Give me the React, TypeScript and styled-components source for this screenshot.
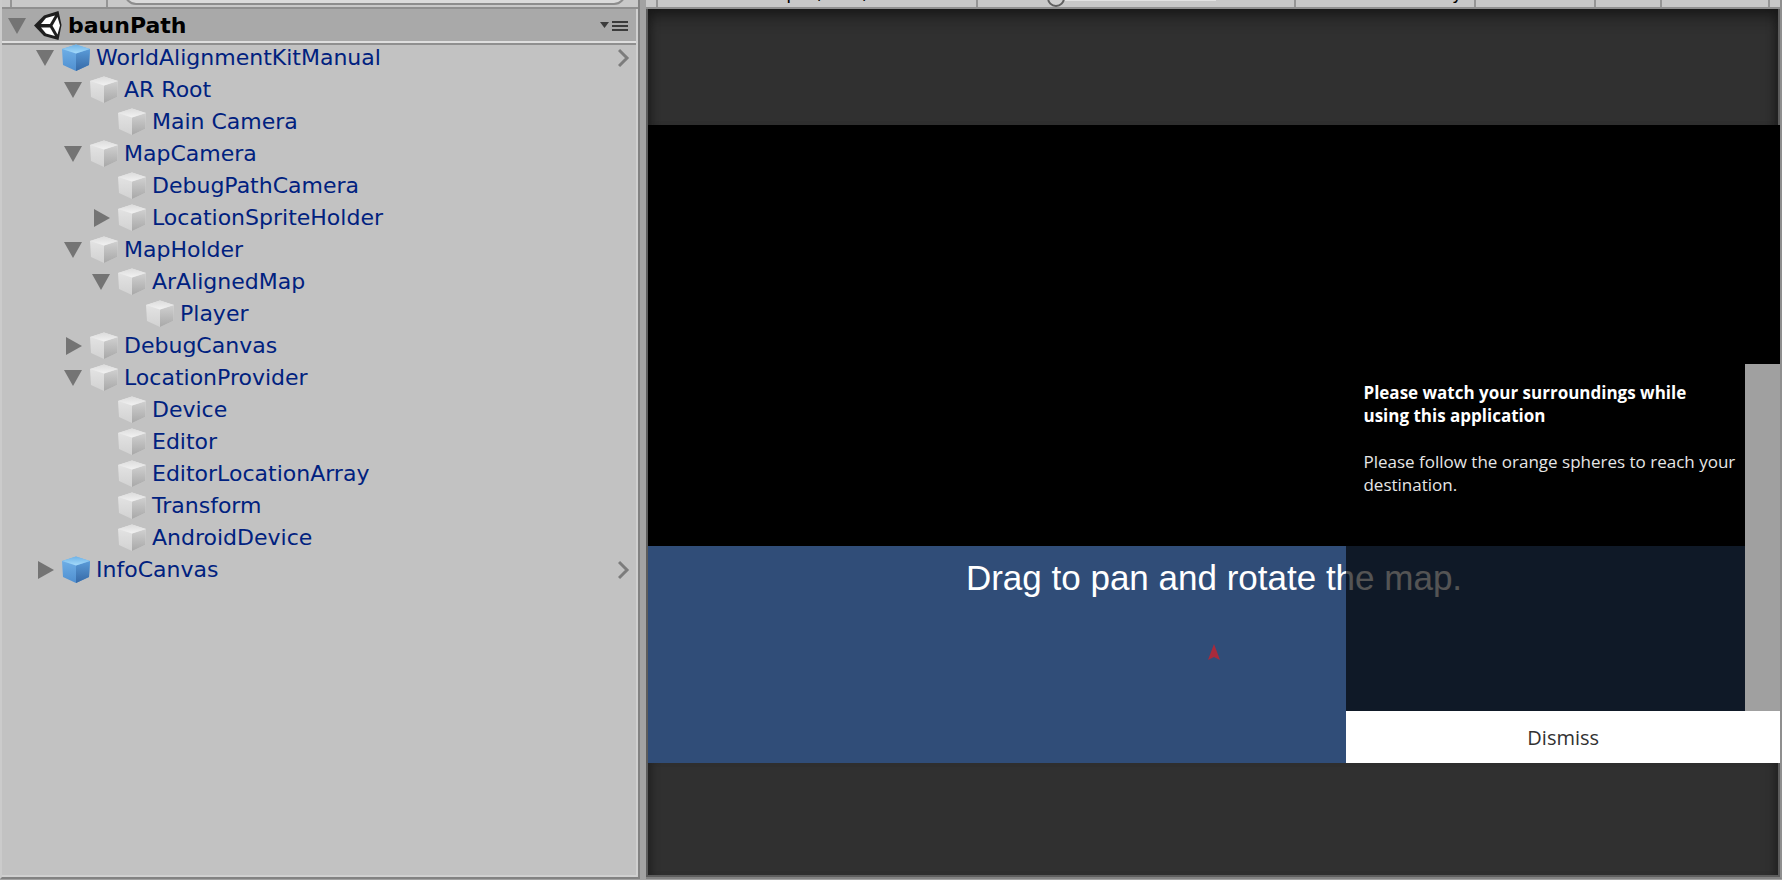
import React from 'react';
import styled, { createGlobalStyle } from 'styled-components';

const Global = createGlobalStyle`
  *, *::before, *::after { box-sizing: border-box; }
  body { margin: 0; background: #a2a2a2; }
  button { font: inherit; border: 0; padding: 0; background: none; cursor: pointer; }
`;

const Editor = styled.main`
  display: grid;
  grid-template-columns: 638fr 1136fr;
  column-gap: 8px;
  min-height: 100vh;
  padding-bottom: 1px;
  background: #a2a2a2;
  overflow: hidden;
`;

const Hierarchy = styled.section`
  display: flex;
  flex-direction: column;
  background: #c2c2c2;
  border-left: 2px solid #cbcbcb;
  border-bottom: 2px solid #828282;
  box-shadow: inset -2px -2px #d0d0d0, 2px 0 #828282;
  font-family: "DejaVu Sans", Verdana, sans-serif;
`;

const Toolbar = styled.div`
  display: flex;
  flex: none;
  height: 9px;
  background: #c8c8c8;
  border-bottom: 2px solid #8f8f8f;
  overflow: hidden;
`;

const ToolCell = styled.div<{ $w: number }>`
  display: flex;
  align-items: flex-end;
  flex: 0 0 ${(p) => p.$w}px;
  border-right: 2px solid #959595;
  overflow: hidden;
`;

const Search = styled.input`
  flex: 1;
  align-self: flex-end;
  min-width: 0;
  height: 24px;
  margin: 0 12px 2px 16px;
  border: 2px solid #8c8c8c;
  border-radius: 12px;
  background: #dadada;
  outline: 0;
`;

const SceneHeader = styled.header`
  display: flex;
  align-items: center;
  flex: none;
  height: 36px;
  margin-right: 2px;
  padding: 0 8px 2px 5px;
  background: #a9a9a9;
  box-shadow: inset 0 -2px #8f8f8f, inset 0 -4px #dedede;
`;

const SceneName = styled.h1`
  flex: 1;
  margin: 0 0 0 6px;
  color: #000;
  font-size: 22px;
  line-height: 32px;
  font-weight: 700;
`;

const IconButton = styled.button`
  display: flex;
  align-items: center;
`;

const Tree = styled.ul`
  list-style: none;
  margin: -3px 0 0;
  padding: 0 6px 0 0;
`;

const Row = styled.li<{ $depth: number }>`
  display: flex;
  align-items: center;
  height: 32px;
  padding-left: ${(p) => 5 + p.$depth * 28}px;
`;

const Toggle = styled.button`
  display: flex;
  align-items: center;
  justify-content: center;
  width: 20px;
  height: 20px;
`;

const ToggleSpace = styled.span`
  width: 20px;
`;

const Label = styled.span`
  flex: 1;
  margin-left: 6px;
  color: #00217f;
  font-size: 22px;
  line-height: 32px;
  white-space: nowrap;
`;

const CubeSvg = styled.svg`
  flex: none;
  margin-left: 7px;
`;

const SceneMark = styled.svg`
  flex: none;
  margin-left: 7px;
`;

const Game = styled.section`
  display: flex;
  flex-direction: column;
  min-width: 0;
  border-right: 2px solid #8f8f8f;
  border-bottom: 2px solid #828282;
`;

const Viewport = styled.div`
  display: flex;
  flex-direction: column;
  flex: 1;
  border: 2px solid #5c5c5c;
  border-top: 0;
  background: #303030;
`;

const Letterbox = styled.div<{ $grow: number; $top?: boolean }>`
  flex: ${(p) => p.$grow} 1 0;
  box-shadow: ${(p) => (p.$top ? 'inset 0 14px 16px -8px #161616, ' : '')}inset 9px 0 8px -6px #202020, inset -9px 0 8px -6px #202020;
`;

const Stage = styled.div`
  position: relative;
  display: grid;
  grid-template-rows: 421fr 217fr;
  flex: 638 1 0;
  margin-right: -2px;
  background: #000;
`;

const MapArea = styled.div`
  grid-row: 2;
  display: flex;
  flex-direction: column;
  align-items: center;
  background: #304d78;
`;

const Hint = styled.p`
  margin: 12px 0 0;
  color: #fff;
  font-family: "Liberation Sans", Arial, sans-serif;
  font-size: 35px;
  line-height: 40px;
  white-space: nowrap;
`;

const Marker = styled.svg`
  margin-top: 46px;
`;

const Notice = styled.div`
  position: absolute;
  right: 0;
  bottom: 0;
  display: grid;
  grid-template-rows: 1fr 52px;
  width: 38.3%;
  height: 62.5%;
  font-family: "Open Sans", "Noto Sans", sans-serif;
`;

const NoticeBody = styled.div`
  display: flex;
  background: rgba(0, 0, 0, 0.67);
`;

const NoticeText = styled.div`
  flex: 1;
  padding: 17px 4px 0 17px;
  color: #e6e6e6;
  font-size: 17px;
  line-height: 23px;
  p { margin: 0 0 23px; }
  strong { color: #fff; }
`;

const ScrollTrack = styled.div`
  width: 35px;
  background: #a0a0a0;
`;

const Dismiss = styled.button`
  && {
    padding-top: 2px;
    background: #fff;
    color: #323232;
    font-size: 20px;
    line-height: 28px;
  }
`;

const ScaleTrack = styled.input`
  appearance: none;
  align-self: flex-end;
  width: 169px;
  height: 20px;
  margin: 0 0 -3px 69px;
  background: linear-gradient(#e2e2e2, #e2e2e2) 0 0 / 100% 11px no-repeat;
  &::-webkit-slider-thumb {
    appearance: none;
    width: 18px;
    height: 18px;
    margin-top: -4px;
    border: 2px solid #606060;
    border-radius: 50%;
    background: #d0d0d0;
  }
`;

const ToolButton = styled.button<{ $pad: number }>`
  && {
    flex: none;
    padding: 0 0 5px ${(p) => p.$pad}px;
    color: #000;
    font-family: "DejaVu Sans", Verdana, sans-serif;
    font-size: 18px;
    line-height: 18px;
    white-space: nowrap;
  }
`;

const Arrow = ({ open }: { open: boolean }) => (
  <svg width="18" height="18" viewBox="0 0 18 18" aria-hidden="true">
    <path d={open ? 'M0 1H18L9 17Z' : 'M2 0V18L18 9Z'} fill="#747474" />
  </svg>
);

const Cube = ({ prefab }: { prefab?: boolean }) => {
  const id = prefab ? 'p' : 'g';
  return (
    <CubeSvg width="28" height="28" viewBox="0 0 28 28" aria-hidden="true">
      <defs>
        <linearGradient id={`${id}t`} x1="0" y1="0" x2="0" y2="1">
          <stop offset="0" stopColor={prefab ? '#6fb2e6' : '#dcdcdc'} />
          <stop offset="1" stopColor={prefab ? '#a5dbfb' : '#f2f2f2'} />
        </linearGradient>
        <linearGradient id={`${id}l`} x1="0" y1="0" x2="0" y2="1">
          <stop offset="0" stopColor={prefab ? '#74b4ea' : '#e6e6e6'} />
          <stop offset="1" stopColor={prefab ? '#4f8fd0' : '#d2d2d2'} />
        </linearGradient>
        <linearGradient id={`${id}r`} x1="0" y1="0" x2="0" y2="1">
          <stop offset="0" stopColor={prefab ? '#5a9bd8' : '#d0d0d0'} />
          <stop offset="1" stopColor={prefab ? '#3669a6' : '#a8a8a8'} />
        </linearGradient>
      </defs>
      <path d="M0 5L14 0.500L28 5L27 21L14 27L1 21Z" fill={`url(#${id}l)`} />
      <path d="M28 5L14 9.500V27L27 21Z" fill={`url(#${id}r)`} />
      <path d="M0 5L14 0.500L28 5L14 9.500Z" fill={`url(#${id}t)`} />
    </CubeSvg>
  );
};

const Chevron = () => (
  <svg width="14" height="20" viewBox="0 0 14 20" fill="none" stroke="#7c7c7c" strokeWidth="3" aria-hidden="true">
    <path d="M1 2L9 10L1 18" />
  </svg>
);

const UnityMark = () => (
  <SceneMark width="28" height="30" viewBox="0 0 28 30" aria-hidden="true">
    <path d="M0 14.500L10 4.500L24.500 0L27.500 14L24.500 29L10 25Z" fill="#1e1e1e" />
    <path d="M12 7L21 4.500L16 13H7Z" fill="#fff" />
    <path d="M7 16.500H16L21 25L12 22.500Z" fill="#fff" />
    <path d="M23.500 6L26 14.500L23.500 23.500L18.500 14.800Z" fill="#fff" />
  </SceneMark>
);

type Node = { name: string; depth: number; open?: boolean; prefab?: boolean };

const nodes: Node[] = [
  { name: 'WorldAlignmentKitManual', depth: 1, open: true, prefab: true },
  { name: 'AR Root', depth: 2, open: true },
  { name: 'Main Camera', depth: 3 },
  { name: 'MapCamera', depth: 2, open: true },
  { name: 'DebugPathCamera', depth: 3 },
  { name: 'LocationSpriteHolder', depth: 3, open: false },
  { name: 'MapHolder', depth: 2, open: true },
  { name: 'ArAlignedMap', depth: 3, open: true },
  { name: 'Player', depth: 4 },
  { name: 'DebugCanvas', depth: 2, open: false },
  { name: 'LocationProvider', depth: 2, open: true },
  { name: 'Device', depth: 3 },
  { name: 'Editor', depth: 3 },
  { name: 'EditorLocationArray', depth: 3 },
  { name: 'Transform', depth: 3 },
  { name: 'AndroidDevice', depth: 3 },
  { name: 'InfoCanvas', depth: 1, open: false, prefab: true },
];

export default function App() {
  return (
    <Editor>
      <Global />
      <Hierarchy>
        <Toolbar>
          <ToolCell $w={10} />
          <ToolCell $w={96} />
          <Search aria-label="Search hierarchy" />
        </Toolbar>
        <SceneHeader>
          <Toggle aria-label="Toggle scene"><Arrow open /></Toggle>
          <UnityMark />
          <SceneName>baunPath</SceneName>
          <IconButton aria-label="Scene menu">
            <svg width="28" height="12" viewBox="0 0 28 12" fill="#3c3c3c" aria-hidden="true">
              <path d="M0 2H9L4.500 8Z" />
              <path d="M12 1H28V3H12ZM12 5H28V7H12ZM12 9H28V11H12Z" />
            </svg>
          </IconButton>
        </SceneHeader>
        <Tree>
          {nodes.map((n) => (
            <Row key={n.name} $depth={n.depth}>
              {n.open === undefined ? (
                <ToggleSpace />
              ) : (
                <Toggle aria-label={`Toggle ${n.name}`}><Arrow open={n.open} /></Toggle>
              )}
              <Cube prefab={n.prefab} />
              <Label>{n.name}</Label>
              {n.prefab && <IconButton aria-label={`Open ${n.name}`}><Chevron /></IconButton>}
            </Row>
          ))}
        </Tree>
      </Hierarchy>
      <Game>
        <Toolbar>
          <ToolCell $w={12} />
          <ToolCell $w={320}><ToolButton $pad={54}>Landscape (16:9)</ToolButton></ToolCell>
          <ToolCell $w={318}><ScaleTrack type="range" min="1" max="5" defaultValue="1" aria-label="Scale" /></ToolCell>
          <ToolCell $w={180}><ToolButton $pad={10}>Maximize on Play</ToolButton></ToolCell>
          <ToolCell $w={120} />
          <ToolCell $w={66} />
          <ToolCell $w={108} />
        </Toolbar>
        <Viewport>
          <Letterbox $grow={116} $top />
          <Stage>
            <MapArea>
              <Hint>Drag to pan and rotate the map.</Hint>
              <Marker width="14" height="16" viewBox="0 0 14 16" aria-hidden="true">
                <path d="M7 0L13 16L7 13L1 16Z" fill="#a82a3c" />
              </Marker>
            </MapArea>
            <Notice>
              <NoticeBody>
                <NoticeText>
                  <p>
                    <strong>
                      Please watch your surroundings while
                      <br />
                      using this application
                    </strong>
                  </p>
                  <p>Please follow the orange spheres to reach your destination.</p>
                </NoticeText>
                <ScrollTrack />
              </NoticeBody>
              <Dismiss>Dismiss</Dismiss>
            </Notice>
          </Stage>
          <Letterbox $grow={112} />
        </Viewport>
      </Game>
    </Editor>
  );
}
